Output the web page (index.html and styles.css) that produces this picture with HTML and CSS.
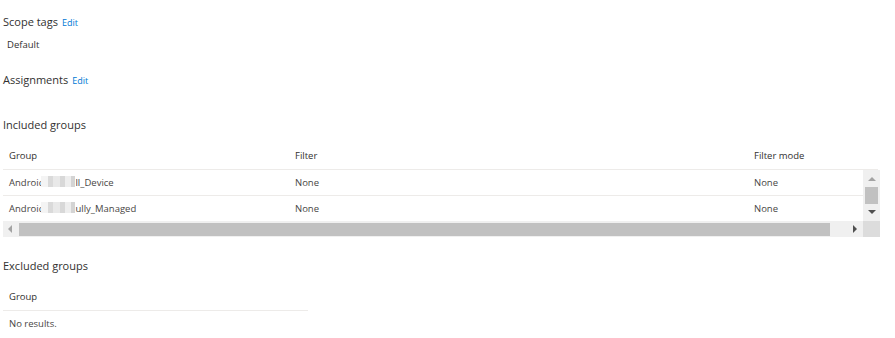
FILE: index.html
```html
<!DOCTYPE html>
<html>
<head>
<meta charset="utf-8">
<link rel="stylesheet" href="styles.css">
</head>
<body>
<div class="page">
  <div class="heading scope"><span class="title">Scope tags</span><a class="edit">Edit</a></div>
  <div class="value">Default</div>
  <div class="heading assign"><span class="title">Assignments</span><a class="edit">Edit</a></div>
  <div class="heading included"><span class="title">Included groups</span></div>

  <div class="grid">
    <div class="grid-head">
      <div class="cell c1">Group</div>
      <div class="cell c2">Filter</div>
      <div class="cell c3">Filter mode</div>
    </div>
    <div class="grid-main">
      <div class="rows">
        <div class="row">
          <div class="cell c1 data">Android<span class="blur"></span>ll_Device</div>
          <div class="cell c2 data">None</div>
          <div class="cell c3 data">None</div>
        </div>
        <div class="row">
          <div class="cell c1 data">Android<span class="blur"></span>ully_Managed</div>
          <div class="cell c2 data">None</div>
          <div class="cell c3 data">None</div>
        </div>
      </div>
      <div class="vscroll">
        <div class="arrow-up"></div>
        <div class="vthumb"></div>
        <div class="arrow-down"></div>
      </div>
    </div>
    <div class="grid-foot">
      <div class="hscroll">
        <div class="arrow-left"></div>
        <div class="hthumb"></div>
        <div class="arrow-right"></div>
      </div>
      <div class="corner"></div>
    </div>
  </div>

  <div class="heading excluded"><span class="title">Excluded groups</span></div>
  <div class="small-grid">
    <div class="small-head">Group</div>
    <div class="small-row">No results.</div>
  </div>
</div>
</body>
</html>
```

FILE: styles.css
```css
html, body {
  margin: 0;
  padding: 0;
  background: #ffffff;
}
body {
  font-family: "Open Sans", "Noto Sans", sans-serif;
  color: #323130;
}
.page {
  padding-left: 3px;
  width: 877px;
}
.heading {
  height: 16px;
  line-height: 16px;
  display: flex;
  align-items: baseline;
  gap: 4px;
}
.title {
  font-size: 11px;
  color: #323130;
}
.edit {
  font-size: 9px;
  color: #0078d4;
  cursor: pointer;
}
.scope { margin-top: 14px; }
.value {
  margin-top: 7px;
  height: 16px;
  line-height: 16px;
  padding-left: 4px;
  font-size: 9.5px;
  color: #323130;
}
.assign { margin-top: 19px; }
.included { margin-top: 29px; }

.grid {
  margin-top: 9px;
  width: 877px;
}
.grid-head {
  display: flex;
  height: 27px;
  border-bottom: 1px solid #edebe9;
  width: 875px;
}
.cell {
  font-size: 9.5px;
  line-height: 27px;
  padding-left: 6px;
  box-sizing: border-box;
  white-space: nowrap;
}
.c1 { width: 286px; }
.c2 { width: 459px; }
.c3 { width: 115px; }
.grid-head .cell { color: #323130; }
.grid-main {
  display: flex;
}
.rows { width: 860px; }
.row {
  display: flex;
  height: 25px;
  border-bottom: 1px solid #edebe9;
}
.row:last-child { border-bottom: 0; }
.row .cell { line-height: 25px; }
.data { color: #484644; }
.blur {
  display: inline-block;
  width: 34px;
  height: 11px;
  margin-left: -3px;
  vertical-align: -1px;
  background: linear-gradient(90deg, #f4f4f4 0 20%, #dadada 20% 35%, #e9e9e9 35% 55%, #d8d8d8 55% 70%, #eeeeee 70% 88%, #d4d4d4 88% 100%);
}
.vscroll {
  width: 17px;
  height: 51px;
  background: #f0f0f0;
  display: flex;
  flex-direction: column;
  align-items: center;
}
.arrow-up {
  margin-top: 7px;
  width: 0; height: 0;
  border-left: 4px solid transparent;
  border-right: 4px solid transparent;
  border-bottom: 4px solid #a3a3a3;
}
.vthumb {
  margin-top: 6px;
  width: 13px;
  height: 17px;
  background: #c1c1c1;
}
.arrow-down {
  margin-top: 6px;
  width: 0; height: 0;
  border-left: 4px solid transparent;
  border-right: 4px solid transparent;
  border-top: 4px solid #505050;
}
.grid-foot {
  display: flex;
  height: 16px;
}
.hscroll {
  width: 860px;
  background: #f0f0f0;
  display: flex;
  align-items: center;
}
.arrow-left {
  margin-left: 5px;
  width: 0; height: 0;
  border-top: 4px solid transparent;
  border-bottom: 4px solid transparent;
  border-right: 4px solid #a3a3a3;
}
.hthumb {
  margin-left: 7px;
  width: 811px;
  height: 13px;
  background: #c1c1c1;
}
.arrow-right {
  margin-left: 23px;
  width: 0; height: 0;
  border-top: 4px solid transparent;
  border-bottom: 4px solid transparent;
  border-left: 4px solid #505050;
}
.corner {
  width: 17px;
  background: #dcdcdc;
}
.excluded { margin-top: 21px; }
.small-grid {
  margin-top: 9px;
  width: 305px;
}
.small-head {
  height: 27px;
  line-height: 27px;
  padding-left: 6px;
  font-size: 9.5px;
  color: #323130;
  border-bottom: 1px solid #edebe9;
}
.small-row {
  height: 25px;
  line-height: 25px;
  padding-left: 6px;
  font-size: 9.5px;
  color: #484644;
}
```
